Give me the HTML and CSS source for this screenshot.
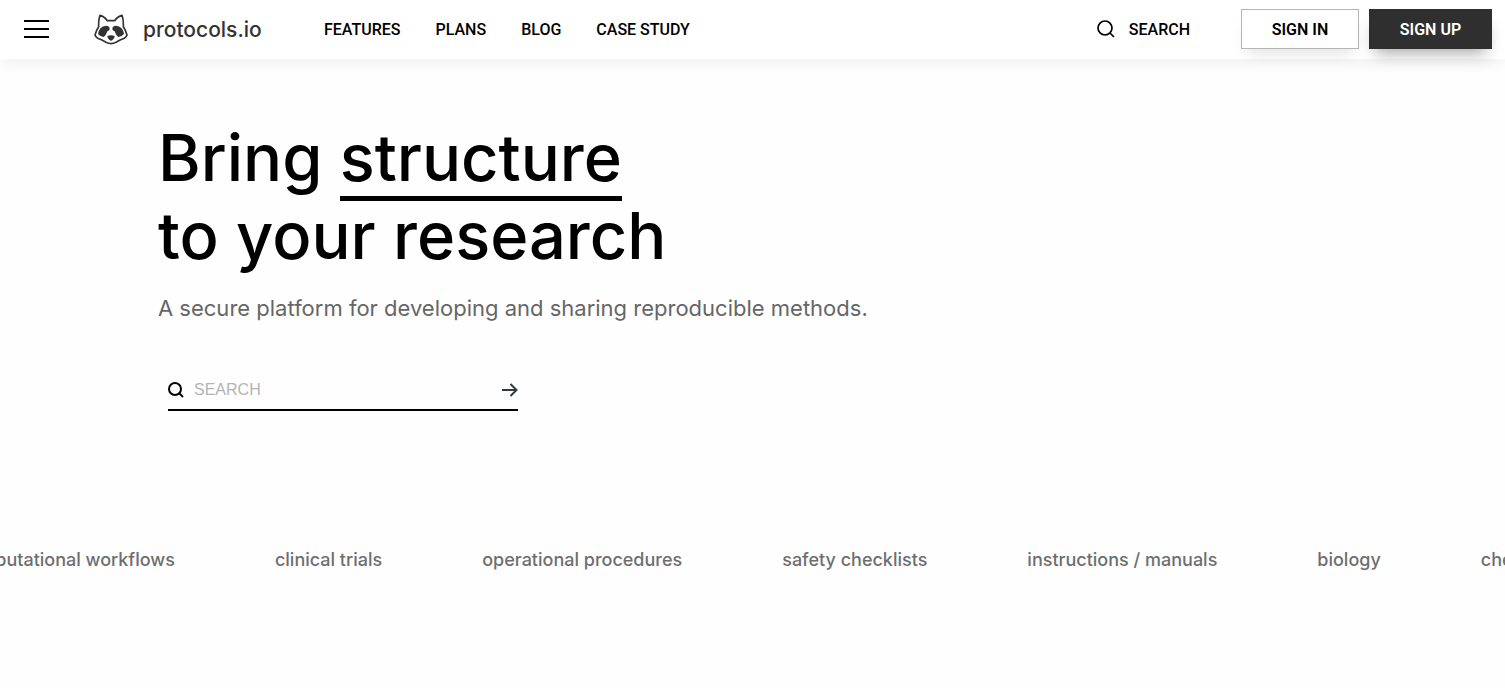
FILE: index.html
```html
<!DOCTYPE html>
<html lang="en">
<head>
<meta charset="utf-8">
<meta name="viewport" content="width=device-width, initial-scale=1">
<title>protocols.io</title>
<link rel="stylesheet" href="styles.css">
</head>
<body>
<header class="topbar">
  <button class="menu" type="button" aria-label="Menu">
    <span class="menu-line"></span><span class="menu-line"></span><span class="menu-line"></span>
  </button>
  <a class="brand" href="#">
    <svg class="brand-mark" viewBox="0 0 102 93" fill="#333" aria-hidden="true">
      <path d="M18 4 Q31 7 40 20 H62 Q71 7 84 4 Q89 17 88 38 Q96 50 99 63 Q97 69 91 73 Q78 78 66 85 Q51 93 36 85 Q24 78 11 73 Q5 69 3 63 Q6 50 14 38 Q13 17 18 4 Z" fill="none" stroke="#333" stroke-width="5" stroke-linejoin="round"/>
      <path d="M12 60 Q16 36 36 35 Q48 36 47 46 Q46 50 40 52 Q37 63 29 69 Q19 69 12 60 Z"/>
      <path d="M90 60 Q86 36 66 35 Q54 36 55 46 Q56 50 62 52 Q65 63 73 69 Q83 69 90 60 Z"/>
      <path d="M40 66 Q51 61 62 66 Q62 74 55 79 Q51 81 47 79 Q40 74 40 66 Z"/>
    </svg>
    <span class="brand-name">protocols.io</span>
  </a>
  <nav class="nav">
    <a href="#">FEATURES</a>
    <a href="#">PLANS</a>
    <a href="#">BLOG</a>
    <a href="#">CASE STUDY</a>
  </nav>
  <a class="top-search" href="#">
    <svg width="18" height="18" viewBox="0 0 18 18" fill="none" stroke="#000" stroke-width="1.700" aria-hidden="true"><circle cx="8" cy="8" r="7"/><path d="M13 13l4 4"/></svg>
    SEARCH
  </a>
  <div class="account">
    <button class="btn" type="button">SIGN IN</button>
    <button class="btn btn-dark" type="button">SIGN UP</button>
  </div>
</header>
<main>
  <section class="hero">
    <h1>Bring <span class="underlined">structure</span><br>to your research</h1>
    <p class="lead">A secure platform for developing and sharing reproducible methods.</p>
    <form class="search">
      <svg width="16" height="16" viewBox="0 0 16 16" fill="none" stroke="#000" stroke-width="2" aria-hidden="true"><circle cx="7" cy="7" r="6"/><path d="M11 11l4 4"/></svg>
      <input type="search" placeholder="SEARCH" aria-label="Search">
      <button class="go" type="submit" aria-label="Go">
        <svg width="16" height="14" viewBox="0 0 16 14" fill="none" stroke="#333a40" stroke-width="2" aria-hidden="true"><path d="M0 7h15M8.500 1l6 6-6 6"/></svg>
      </button>
    </form>
  </section>
  <section class="topics">
    <ul class="track">
      <li>computational workflows</li>
      <li>clinical trials</li>
      <li>operational procedures</li>
      <li>safety checklists</li>
      <li>instructions / manuals</li>
      <li>biology</li>
      <li>chemistry</li>
    </ul>
  </section>
</main>
</body>
</html>
```
FILE: styles.css
```css
* { box-sizing: border-box; }
body {
  margin: 0;
  background: #fefefe;
  color: #000;
  font-family: Inter, "Liberation Sans", sans-serif;
  overflow-x: hidden;
}
button { font: inherit; cursor: pointer; }
a { color: inherit; text-decoration: none; }
svg { display: block; flex: none; }

.topbar {
  display: flex;
  align-items: center;
  height: 59px;
  padding: 0 13px 1px 24px;
  background: #fff;
  box-shadow: 0 4px 16px rgba(0, 0, 0, 0.06);
  font-family: Roboto, sans-serif;
  font-size: 16px;
  font-weight: 500;
}
.menu {
  display: grid;
  gap: 6px;
  width: 25px;
  padding: 0;
  border: 0;
  background: none;
}
.menu-line { height: 2px; background: #000; }
.brand {
  display: flex;
  align-items: center;
  gap: 15px;
  margin-left: 45px;
}
.brand-mark { width: 34px; height: 31px; }
.brand-name {
  width: 122px;
  color: #333;
  font-family: Inter, sans-serif;
  font-size: 21px;
  font-weight: 500;
}
.nav {
  display: flex;
  gap: 35px;
  margin-left: 59px;
}
.top-search {
  display: flex;
  align-items: center;
  gap: 14px;
  margin-left: auto;
}
.account {
  display: flex;
  gap: 10px;
  margin-left: 51px;
}
.btn {
  width: 118px;
  height: 40px;
  padding: 0;
  border: 1px solid #b4b4b4;
  background: #fff;
  color: #000;
  font-weight: 600;
  box-shadow: 0 10px 16px -6px rgba(0, 0, 0, 0.12);
}
.btn-dark {
  width: 123px;
  border-color: #2f2f2f;
  background: #2f2f2f;
  color: #fff;
  box-shadow: 0 10px 16px -6px rgba(0, 0, 0, 0.35);
}

.hero { padding: 60px 158px 0; }
h1 {
  margin: 0;
  font-size: 65px;
  font-weight: 500;
  line-height: 78px;
}
.underlined {
  display: inline-block;
  height: 82px;
  margin-bottom: -4px;
  border-bottom: 5px solid #000;
  vertical-align: top;
}
.lead {
  margin: 17px 0 0;
  color: #666;
  font-size: 22px;
  line-height: 32px;
}
.search {
  display: flex;
  align-items: center;
  gap: 10px;
  width: 350px;
  max-width: 100%;
  height: 40px;
  margin: 47px 0 0 10px;
  border-bottom: 2px solid #000;
}
.search input {
  flex: 1;
  min-width: 0;
  padding: 0;
  border: 0;
  outline: 0;
  background: none;
  font-family: "Liberation Sans", sans-serif;
  font-size: 16px;
}
.search input::placeholder { color: #b4b4b4; }
.go { padding: 0; border: 0; background: none; }

.topics {
  margin-top: 137px;
  overflow: hidden;
}
.track {
  display: flex;
  gap: 100px;
  margin: 0 0 0 -42px;
  padding: 0;
  list-style: none;
  color: #6e6e6e;
  font-size: 18px;
  font-weight: 500;
  line-height: 24px;
  white-space: nowrap;
}
```
